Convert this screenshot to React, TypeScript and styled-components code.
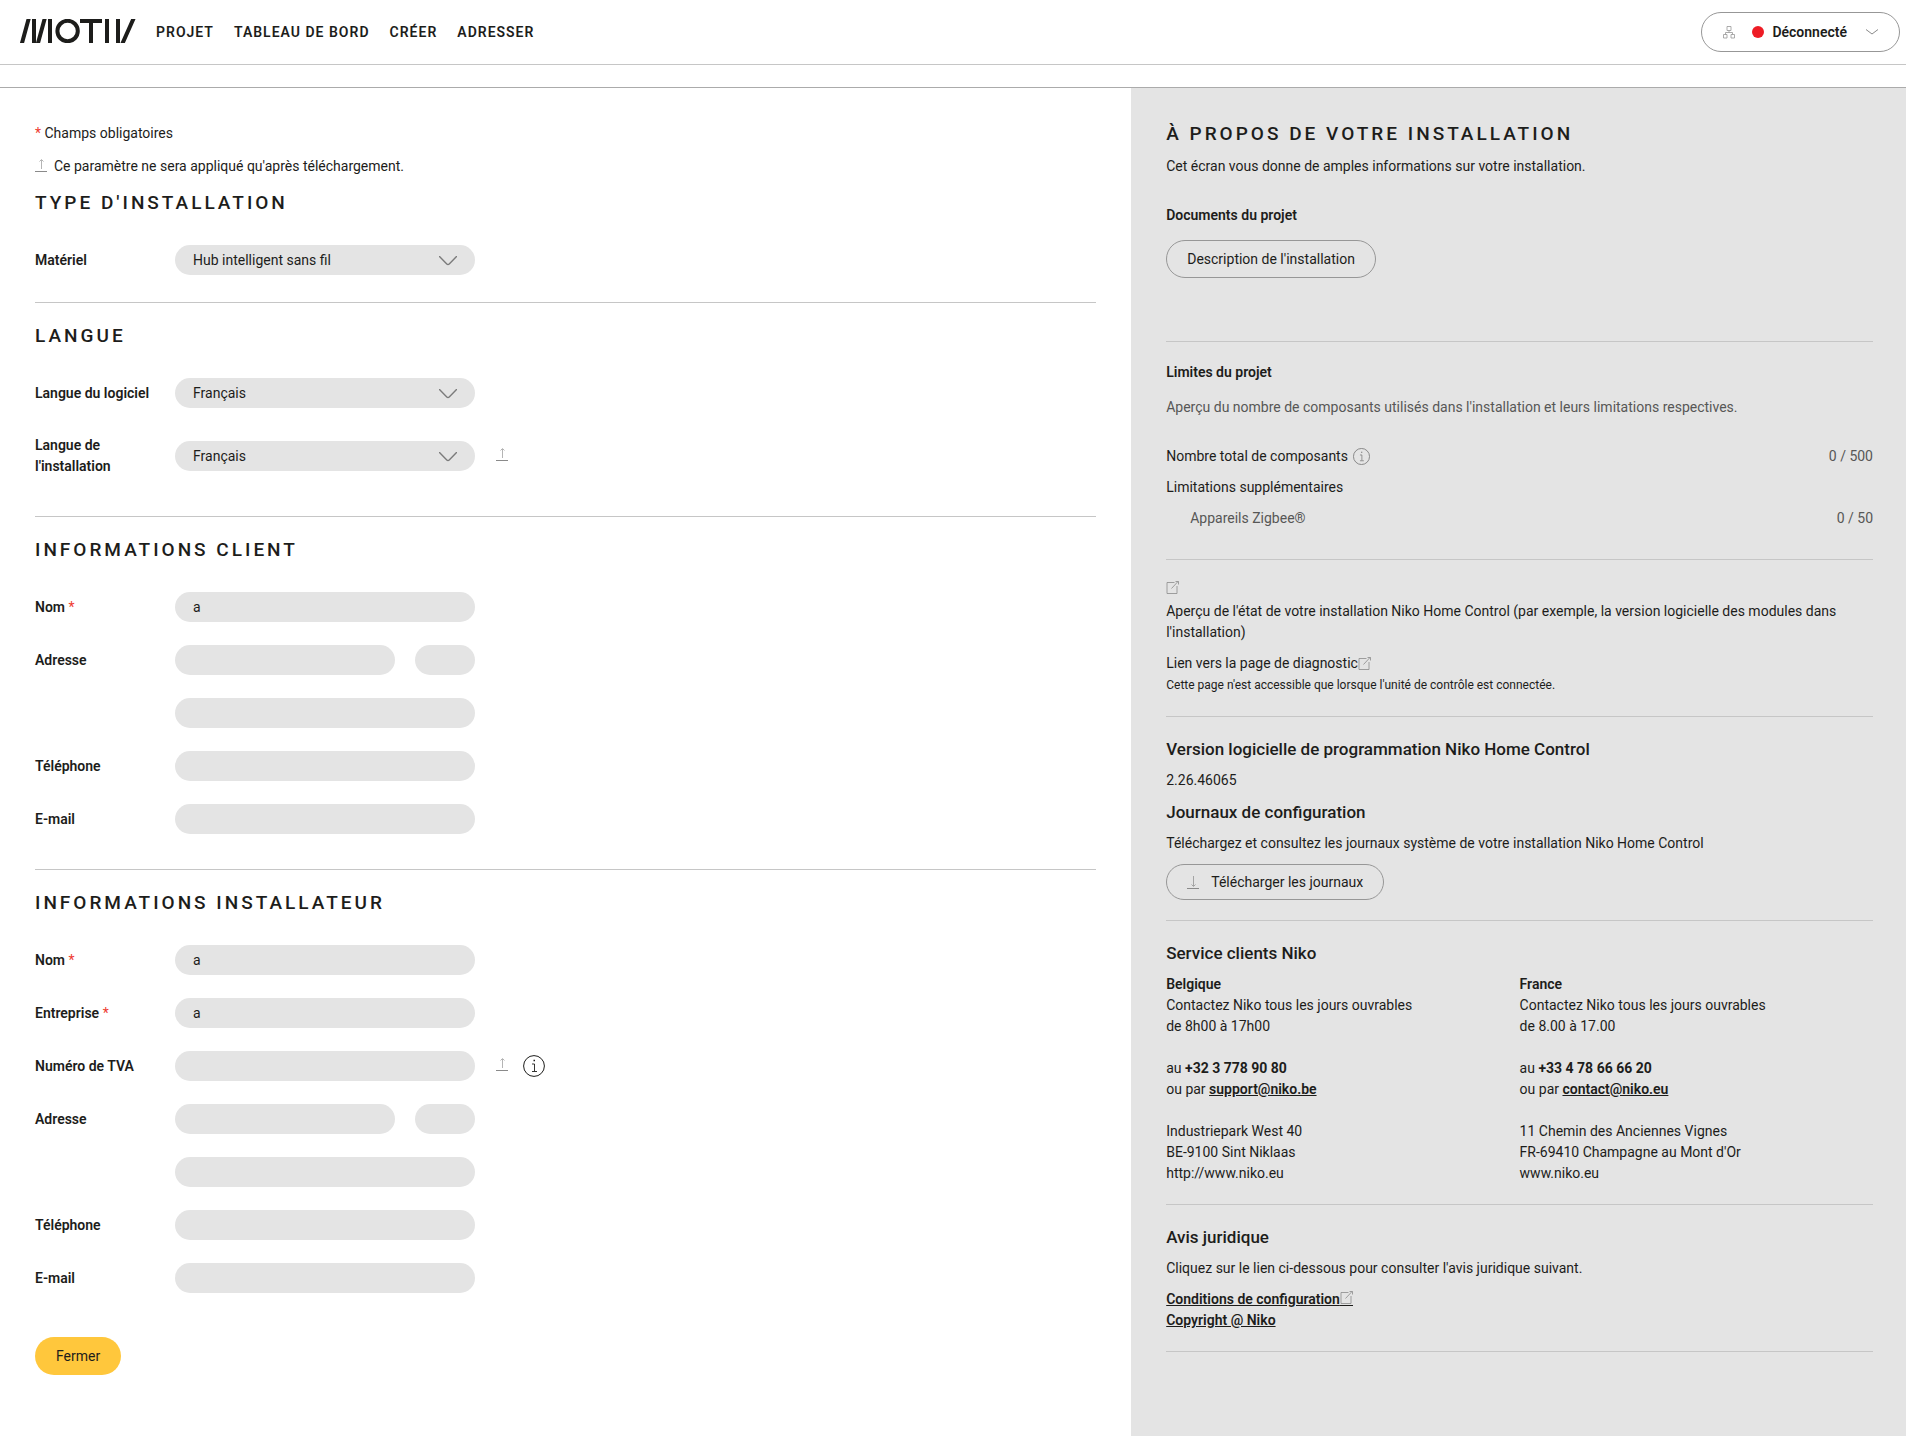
import React from 'react';
import styled, { createGlobalStyle } from 'styled-components';

const ink = '#1d1d1b';

const GlobalStyle = createGlobalStyle`
  *, *::before, *::after { box-sizing: border-box; }
  body {
    margin: 0;
    background: #fff;
    color: ${ink};
    font: 400 14px/21px Roboto, "Liberation Sans", sans-serif;
  }
  button, input, select { font: inherit; color: inherit; }
  h1, h2, h3, p { margin: 0; }
`;

const Page = styled.div`
  display: flex;
  flex-direction: column;
  min-height: 100vh;
`;

const Header = styled.header`
  display: flex;
  align-items: center;
  height: 65px;
  padding: 0 6px 0 20px;
  border-bottom: 1px solid #c6c6c6;
`;

const LogoLink = styled.a`
  display: flex;
  margin: 0 20px 2px 0;
`;

const Nav = styled.nav`
  display: flex;
  gap: 20px;
  margin-right: auto;
`;

const NavLink = styled.a`
  color: ${ink};
  font-weight: 600;
  letter-spacing: 1px;
  text-decoration: none;
  text-transform: uppercase;
`;

const Status = styled.button`
  display: flex;
  align-items: center;
  height: 40px;
  padding: 0 21px;
  border: 1px solid #979797;
  border-radius: 20px;
  background: #fff;
  font-weight: 600;
`;

const StatusDot = styled.span`
  width: 12px;
  height: 12px;
  margin: 0 8px 0 17px;
  border-radius: 50%;
  background: #ee1c25;
`;

const StatusCaret = styled.span`
  display: flex;
  margin-left: 19px;
`;

const Strip = styled.div`
  height: 23px;
  border-bottom: 1px solid #ababab;
`;

const Columns = styled.div`
  display: grid;
  flex: 1;
  grid-template-columns: minmax(0, 73fr) minmax(0, 50fr);
`;

const Main = styled.main`
  padding: 35px 35px 20px;
`;

const Aside = styled.aside`
  padding: 34px 33px 20px 35px;
  background: #e4e4e4;
`;

const Intro = styled.div`
  display: flex;
  flex-direction: column;
  gap: 12px;
  margin-bottom: 14px;
`;

const Note = styled.p`
  display: flex;
  align-items: center;
  gap: 7px;
`;

const Star = styled.span`
  color: #ee3a30;
  font-weight: 400;
`;

const Title = styled.h2`
  font-size: 19px;
  font-weight: 500;
  line-height: 24px;
  letter-spacing: 3px;
  text-transform: uppercase;
`;

const FormSection = styled.section<{ $tight?: boolean }>`
  padding-bottom: ${p => (p.$tight ? 27 : 35)}px;

  & + & {
    padding-top: 21px;
    border-top: 1px solid #c6c6c6;
  }
`;

const Rows = styled.div`
  display: flex;
  flex-direction: column;
  gap: 23px;
  margin-top: 30px;
`;

const Row = styled.div`
  display: flex;
  align-items: center;
  min-height: 30px;
`;

const Label = styled.label`
  width: 140px;
  padding: 4px 20px 4px 0;
  font-weight: 600;
`;

const Fields = styled.div`
  display: flex;
  gap: 20px;
  width: 300px;
`;

const Extras = styled.div`
  display: flex;
  align-items: center;
  gap: 15px;
  margin-left: 21px;
`;

const Input = styled.input<{ $short?: boolean }>`
  flex: ${p => (p.$short ? '0 0 60px' : '1 1 0')};
  min-width: 0;
  height: 30px;
  padding: 0 18px;
  border: 0;
  border-radius: 15px;
  background: #e4e4e4;
`;

const SelectBox = styled.div`
  position: relative;
  flex: 1;

  svg {
    position: absolute;
    top: 11px;
    right: 18px;
    pointer-events: none;
  }
`;

const Select = styled.select`
  display: block;
  width: 100%;
  height: 30px;
  padding: 0 50px 0 18px;
  border: 0;
  border-radius: 15px;
  background: #e4e4e4;
  appearance: none;
`;

const CloseButton = styled.button`
  height: 38px;
  margin-top: 9px;
  padding: 0 21px;
  border: 0;
  border-radius: 19px;
  background: #ffc73c;
`;

const Block = styled.section`
  display: flex;
  flex-direction: column;
  align-items: stretch;
  gap: 10px;
  padding: 21px 0 20px;
  border-bottom: 1px solid #c6c6c6;
`;

const AboutBlock = styled(Block)`
  padding: 0 0 63px;
`;

const LimitsBlock = styled(Block)`
  gap: 14px;
  padding: 20px 0 30px;
`;

const Documents = styled.div`
  display: flex;
  flex-direction: column;
  align-items: flex-start;
  gap: 14px;
  margin-top: 18px;
`;

const Small = styled.p`
  margin-top: 1px;
  font-size: 12px;
`;

const Muted = styled.p`
  color: #575756;
`;

const Subtitle = styled.h3`
  font-size: 14px;
  font-weight: 600;
`;

const Heading = styled.h3`
  font-size: 17px;
  font-weight: 500;
  line-height: 22px;
`;

const Outline = styled.button<{ $low?: boolean }>`
  display: flex;
  align-items: center;
  align-self: flex-start;
  gap: 12px;
  height: ${p => (p.$low ? 36 : 38)}px;
  padding: 0 20px;
  border: 1px solid #979797;
  border-radius: 19px;
  background: transparent;
`;

const Limits = styled.dl`
  display: flex;
  flex-direction: column;
  gap: 10px;
  margin: 14px 0 0;
`;

const Limit = styled.div<{ $nested?: boolean }>`
  display: flex;
  justify-content: space-between;
  padding-left: ${p => (p.$nested ? 24 : 0)}px;
  color: ${p => (p.$nested ? '#575756' : ink)};

  dt { display: flex; align-items: center; gap: 5px; }
  dd { margin: 0; color: #575756; }
`;

const PlainLink = styled.a`
  display: flex;
  align-items: center;
  color: ${ink};
  text-decoration: none;
`;

const IconLink = styled(PlainLink)`
  margin-bottom: 7px;
`;

const BoldLink = styled.a`
  color: ${ink};
  font-weight: 600;

  svg {
    box-sizing: content-box;
    padding-bottom: 1px;
    border-bottom: 1px solid ${ink};
    vertical-align: -2px;
  }
`;

const LinkList = styled.div`
  display: flex;
  flex-direction: column;
  align-items: flex-start;
`;

const Contacts = styled.div`
  display: grid;
  grid-template-columns: 1fr 1fr;
`;

const Contact = styled.address`
  display: flex;
  flex-direction: column;
  gap: 21px;
  font-style: normal;
`;

const Logo = () => (
  <svg width="116" height="24" viewBox="0 0 116 24" role="img" aria-label="Motiv" fill="none" stroke={ink} strokeWidth="4">
    <path d="M1.6 25.5 9-1.5M14 0V24M17.6 25.5 25-1.5M30 0V24" />
    <circle cx="47.6" cy="12" r="10.2" />
    <path d="M60 2H82M71 2V24M87 0V24M98 0V24M102 25.5 114-1.5" />
  </svg>
);

const Upload = () => (
  <svg width="12" height="16" viewBox="0 0 12 16" fill="none" aria-hidden="true">
    <path d="M0 12.5H12" stroke="#8a8a8a" />
    <path d="M6.5 10V1M4.5 2.5 6.5.5 8.5 2.5" stroke="#b4b4b4" />
  </svg>
);

const Download = () => (
  <svg width="12" height="13" viewBox="0 0 12 13" fill="none" aria-hidden="true">
    <path d="M0 12.5H12" stroke="#8a8a8a" />
    <path d="M6.5 0V10M4.5 8.5 6.5 10.5 8.5 8.5" stroke="#a4a4a4" />
  </svg>
);

const Info = ({ size, color }: { size: number; color: string }) => (
  <svg width={size} height={size} viewBox="0 0 22 22" fill="none" stroke={color} role="img" aria-label="Information">
    <circle cx="11" cy="11" r="10.4" />
    <path d="M9 9H11.5V16M9 16.5H14" strokeWidth=".9" />
    <path d="M10.5 5.5H12" strokeWidth="1.6" />
  </svg>
);

const External = () => (
  <svg width="13" height="13" viewBox="0 0 13 13" fill="none" stroke="#8a8a8a" aria-hidden="true">
    <path d="M8.5 1.5H1V12.5H11V5M5.5 7.5 12 .5M9.5.5H12.5V3.5" strokeWidth=".8" />
  </svg>
);

const Network = () => (
  <svg width="12" height="13" viewBox="0 0 12 13" fill="none" stroke="#979797" aria-hidden="true">
    <path d="M4 .5H8V4.5H4ZM.5 8.5H4V12H.5ZM8 8.5H11.5V12H8ZM6 4.5V6.5M2.5 8.5V6.5H9.5V8.5" strokeWidth=".8" />
  </svg>
);

const SmallCaret = () => (
  <svg width="12" height="6" viewBox="0 0 12 6" fill="none" stroke="#8a8a8a" aria-hidden="true">
    <path d="M0 .5 6 5 12 .5" />
  </svg>
);

const Caret = () => (
  <svg width="18" height="10" viewBox="0 0 18 10" fill="none" stroke="#7b7b7b" strokeWidth="1.4" aria-hidden="true">
    <path d="M.5.5 7.8 8Q9 9.2 10.2 8L17.5.5" strokeLinecap="round" />
  </svg>
);

type TextRowProps = {
  id: string;
  label?: string;
  name?: string;
  value?: string;
  type?: string;
  required?: boolean;
  split?: boolean;
  extras?: React.ReactNode;
};

const TextRow = ({ id, label, name, value, type = 'text', required, split, extras }: TextRowProps) => (
  <Row>
    <Label htmlFor={id}>
      {label}
      {required && <Star> *</Star>}
    </Label>
    <Fields>
      <Input id={id} type={type} defaultValue={value} required={required} aria-label={name} />
      {split && <Input $short type="text" aria-label="Numéro" />}
    </Fields>
    {extras && <Extras>{extras}</Extras>}
  </Row>
);

const SelectRow = ({ id, label, options, extras }: { id: string; label: string; options: string[]; extras?: React.ReactNode }) => (
  <Row>
    <Label htmlFor={id}>{label}</Label>
    <Fields>
      <SelectBox>
        <Select id={id}>
          {options.map(o => <option key={o}>{o}</option>)}
        </Select>
        <Caret />
      </SelectBox>
    </Fields>
    {extras && <Extras>{extras}</Extras>}
  </Row>
);

const contacts = [
  {
    country: 'Belgique',
    hours: 'de 8h00 à 17h00',
    phone: '+32 3 778 90 80',
    mail: 'support@niko.be',
    address: ['Industriepark West 40', 'BE-9100 Sint Niklaas', 'http://www.niko.eu'],
  },
  {
    country: 'France',
    hours: 'de 8.00 à 17.00',
    phone: '+33 4 78 66 66 20',
    mail: 'contact@niko.eu',
    address: ['11 Chemin des Anciennes Vignes', "FR-69410 Champagne au Mont d'Or", 'www.niko.eu'],
  },
];

const App = () => (
  <Page>
    <GlobalStyle />
    <Header>
      <LogoLink href="#"><Logo /></LogoLink>
      <Nav>
        {['Projet', 'Tableau de bord', 'Créer', 'Adresser'].map(n => (
          <NavLink key={n} href="#">{n}</NavLink>
        ))}
      </Nav>
      <Status type="button">
        <Network />
        <StatusDot />
        Déconnecté
        <StatusCaret><SmallCaret /></StatusCaret>
      </Status>
    </Header>
    <Strip />
    <Columns>
      <Main>
        <Intro>
          <p><Star>*</Star> Champs obligatoires</p>
          <Note><Upload />Ce paramètre ne sera appliqué qu'après téléchargement.</Note>
        </Intro>
        <FormSection $tight>
          <Title>Type d'installation</Title>
          <Rows>
            <SelectRow id="hardware" label="Matériel" options={['Hub intelligent sans fil']} />
          </Rows>
        </FormSection>
        <FormSection>
          <Title>Langue</Title>
          <Rows>
            <SelectRow id="lang-software" label="Langue du logiciel" options={['Français']} />
            <SelectRow id="lang-install" label="Langue de l'installation" options={['Français']} extras={<Upload />} />
          </Rows>
        </FormSection>
        <FormSection>
          <Title>Informations client</Title>
          <Rows>
            <TextRow id="client-name" label="Nom" value="a" required />
            <TextRow id="client-street" label="Adresse" split />
            <TextRow id="client-city" name="Ville" />
            <TextRow id="client-phone" label="Téléphone" type="tel" />
            <TextRow id="client-mail" label="E-mail" type="email" />
          </Rows>
        </FormSection>
        <FormSection>
          <Title>Informations installateur</Title>
          <Rows>
            <TextRow id="inst-name" label="Nom" value="a" required />
            <TextRow id="inst-company" label="Entreprise" value="a" required />
            <TextRow
              id="inst-vat"
              label="Numéro de TVA"
              extras={<><Upload /><Info size={22} color={ink} /></>}
            />
            <TextRow id="inst-street" label="Adresse" split />
            <TextRow id="inst-city" name="Ville" />
            <TextRow id="inst-phone" label="Téléphone" type="tel" />
            <TextRow id="inst-mail" label="E-mail" type="email" />
          </Rows>
        </FormSection>
        <CloseButton type="button">Fermer</CloseButton>
      </Main>
      <Aside>
        <AboutBlock>
          <Title>À propos de votre installation</Title>
          <p>Cet écran vous donne de amples informations sur votre installation.</p>
          <Documents>
            <Subtitle>Documents du projet</Subtitle>
            <Outline type="button">Description de l'installation</Outline>
          </Documents>
        </AboutBlock>
        <LimitsBlock>
          <Subtitle>Limites du projet</Subtitle>
          <Muted>Aperçu du nombre de composants utilisés dans l'installation et leurs limitations respectives.</Muted>
          <Limits>
            <Limit><dt>Nombre total de composants <Info size={17} color="#6f6f6f" /></dt><dd>0 / 500</dd></Limit>
            <Limit><dt>Limitations supplémentaires</dt></Limit>
            <Limit $nested><dt>Appareils Zigbee®</dt><dd>0 / 50</dd></Limit>
          </Limits>
        </LimitsBlock>
        <Block>
          <div>
            <IconLink href="#" aria-label="État de l'installation"><External /></IconLink>
            <p>Aperçu de l'état de votre installation Niko Home Control (par exemple, la version logicielle des modules dans l'installation)</p>
          </div>
          <div>
            <PlainLink href="#">Lien vers la page de diagnostic<External /></PlainLink>
            <Small>Cette page n'est accessible que lorsque l'unité de contrôle est connectée.</Small>
          </div>
        </Block>
        <Block>
          <Heading>Version logicielle de programmation Niko Home Control</Heading>
          <p>2.26.46065</p>
          <Heading>Journaux de configuration</Heading>
          <p>Téléchargez et consultez les journaux système de votre installation Niko Home Control</p>
          <Outline type="button" $low><Download />Télécharger les journaux</Outline>
        </Block>
        <Block>
          <Heading>Service clients Niko</Heading>
          <Contacts>
            {contacts.map(c => (
              <Contact key={c.country}>
                <div>
                  <Subtitle>{c.country}</Subtitle>
                  Contactez Niko tous les jours ouvrables<br />
                  {c.hours}
                </div>
                <div>
                  au <b>{c.phone}</b><br />
                  ou par <BoldLink href={`mailto:${c.mail}`}>{c.mail}</BoldLink>
                </div>
                <div>
                  {c.address.map(line => <div key={line}>{line}</div>)}
                </div>
              </Contact>
            ))}
          </Contacts>
        </Block>
        <Block>
          <Heading>Avis juridique</Heading>
          <p>Cliquez sur le lien ci-dessous pour consulter l'avis juridique suivant.</p>
          <LinkList>
            <BoldLink href="#">Conditions de configuration<External /></BoldLink>
            <BoldLink href="#">Copyright @ Niko</BoldLink>
          </LinkList>
        </Block>
      </Aside>
    </Columns>
  </Page>
);

export default App;
